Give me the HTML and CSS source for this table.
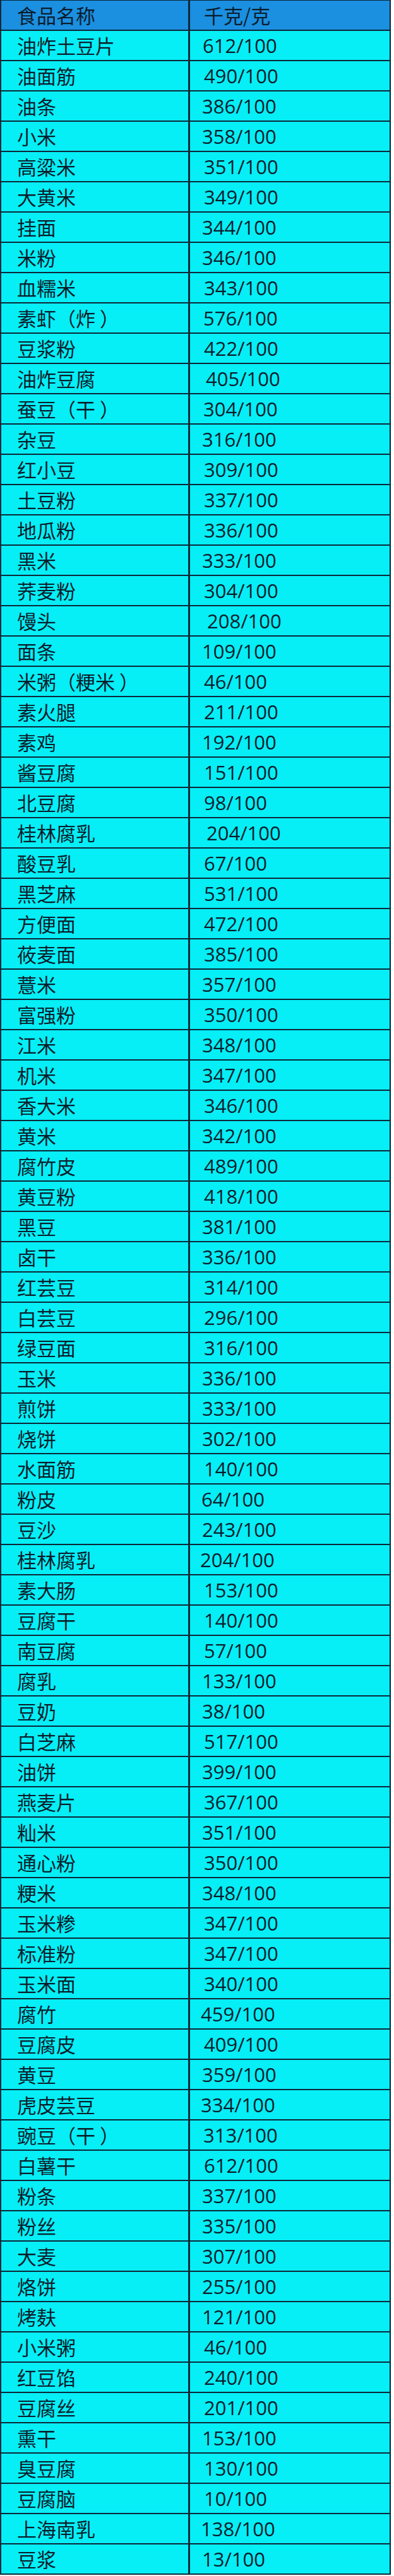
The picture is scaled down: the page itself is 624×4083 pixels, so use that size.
FILE: index.html
```html
<!DOCTYPE html>
<html lang="zh">
<head>
<meta charset="utf-8">
<title>食品名称 千克/克</title>
<link rel="stylesheet" href="styles.css">
</head>
<body>
<div class="table">
  <div class="row head"><div class="name">食品名称</div><div class="val o3">千克/克</div></div>
  <div class="row"><div class="name">油炸土豆片</div><div class="val o1">612/100</div></div>
  <div class="row"><div class="name">油面筋</div><div class="val o3">490/100</div></div>
  <div class="row"><div class="name">油条</div><div class="val">386/100</div></div>
  <div class="row"><div class="name">小米</div><div class="val">358/100</div></div>
  <div class="row"><div class="name">高粱米</div><div class="val o3">351/100</div></div>
  <div class="row"><div class="name">大黄米</div><div class="val o3">349/100</div></div>
  <div class="row"><div class="name">挂面</div><div class="val">344/100</div></div>
  <div class="row"><div class="name">米粉</div><div class="val">346/100</div></div>
  <div class="row"><div class="name">血糯米</div><div class="val o3">343/100</div></div>
  <div class="row"><div class="name">素虾（炸 ）</div><div class="val o2">576/100</div></div>
  <div class="row"><div class="name">豆浆粉</div><div class="val o3">422/100</div></div>
  <div class="row"><div class="name">油炸豆腐</div><div class="val o6">405/100</div></div>
  <div class="row"><div class="name">蚕豆（干 ）</div><div class="val o2">304/100</div></div>
  <div class="row"><div class="name">杂豆</div><div class="val">316/100</div></div>
  <div class="row"><div class="name">红小豆</div><div class="val o3">309/100</div></div>
  <div class="row"><div class="name">土豆粉</div><div class="val o3">337/100</div></div>
  <div class="row"><div class="name">地瓜粉</div><div class="val o3">336/100</div></div>
  <div class="row"><div class="name">黑米</div><div class="val">333/100</div></div>
  <div class="row"><div class="name">荞麦粉</div><div class="val o3">304/100</div></div>
  <div class="row"><div class="name">馒头</div><div class="val o8">208/100</div></div>
  <div class="row"><div class="name">面条</div><div class="val">109/100</div></div>
  <div class="row"><div class="name">米粥（粳米 ）</div><div class="val o3">46/100</div></div>
  <div class="row"><div class="name">素火腿</div><div class="val o3">211/100</div></div>
  <div class="row"><div class="name">素鸡</div><div class="val">192/100</div></div>
  <div class="row"><div class="name">酱豆腐</div><div class="val o3">151/100</div></div>
  <div class="row"><div class="name">北豆腐</div><div class="val o3">98/100</div></div>
  <div class="row"><div class="name">桂林腐乳</div><div class="val o7">204/100</div></div>
  <div class="row"><div class="name">酸豆乳</div><div class="val o3">67/100</div></div>
  <div class="row"><div class="name">黑芝麻</div><div class="val o3">531/100</div></div>
  <div class="row"><div class="name">方便面</div><div class="val o3">472/100</div></div>
  <div class="row"><div class="name">莜麦面</div><div class="val o3">385/100</div></div>
  <div class="row"><div class="name">薏米</div><div class="val">357/100</div></div>
  <div class="row"><div class="name">富强粉</div><div class="val o3">350/100</div></div>
  <div class="row"><div class="name">江米</div><div class="val">348/100</div></div>
  <div class="row"><div class="name">机米</div><div class="val">347/100</div></div>
  <div class="row"><div class="name">香大米</div><div class="val o3">346/100</div></div>
  <div class="row"><div class="name">黄米</div><div class="val">342/100</div></div>
  <div class="row"><div class="name">腐竹皮</div><div class="val o3">489/100</div></div>
  <div class="row"><div class="name">黄豆粉</div><div class="val o3">418/100</div></div>
  <div class="row"><div class="name">黑豆</div><div class="val">381/100</div></div>
  <div class="row"><div class="name">卤干</div><div class="val">336/100</div></div>
  <div class="row"><div class="name">红芸豆</div><div class="val o3">314/100</div></div>
  <div class="row"><div class="name">白芸豆</div><div class="val o3">296/100</div></div>
  <div class="row"><div class="name">绿豆面</div><div class="val o3">316/100</div></div>
  <div class="row"><div class="name">玉米</div><div class="val">336/100</div></div>
  <div class="row"><div class="name">煎饼</div><div class="val">333/100</div></div>
  <div class="row"><div class="name">烧饼</div><div class="val">302/100</div></div>
  <div class="row"><div class="name">水面筋</div><div class="val o3">140/100</div></div>
  <div class="row"><div class="name">粉皮</div><div class="val m1">64/100</div></div>
  <div class="row"><div class="name">豆沙</div><div class="val">243/100</div></div>
  <div class="row"><div class="name">桂林腐乳</div><div class="val m3">204/100</div></div>
  <div class="row"><div class="name">素大肠</div><div class="val o3">153/100</div></div>
  <div class="row"><div class="name">豆腐干</div><div class="val o3">140/100</div></div>
  <div class="row"><div class="name">南豆腐</div><div class="val o3">57/100</div></div>
  <div class="row"><div class="name">腐乳</div><div class="val">133/100</div></div>
  <div class="row"><div class="name">豆奶</div><div class="val">38/100</div></div>
  <div class="row"><div class="name">白芝麻</div><div class="val o3">517/100</div></div>
  <div class="row"><div class="name">油饼</div><div class="val">399/100</div></div>
  <div class="row"><div class="name">燕麦片</div><div class="val o3">367/100</div></div>
  <div class="row"><div class="name">籼米</div><div class="val">351/100</div></div>
  <div class="row"><div class="name">通心粉</div><div class="val o3">350/100</div></div>
  <div class="row"><div class="name">粳米</div><div class="val">348/100</div></div>
  <div class="row"><div class="name">玉米糁</div><div class="val o3">347/100</div></div>
  <div class="row"><div class="name">标准粉</div><div class="val o3">347/100</div></div>
  <div class="row"><div class="name">玉米面</div><div class="val o3">340/100</div></div>
  <div class="row"><div class="name">腐竹</div><div class="val m2">459/100</div></div>
  <div class="row"><div class="name">豆腐皮</div><div class="val o3">409/100</div></div>
  <div class="row"><div class="name">黄豆</div><div class="val">359/100</div></div>
  <div class="row"><div class="name">虎皮芸豆</div><div class="val m2">334/100</div></div>
  <div class="row"><div class="name">豌豆（干 ）</div><div class="val o2">313/100</div></div>
  <div class="row"><div class="name">白薯干</div><div class="val o3">612/100</div></div>
  <div class="row"><div class="name">粉条</div><div class="val">337/100</div></div>
  <div class="row"><div class="name">粉丝</div><div class="val">335/100</div></div>
  <div class="row"><div class="name">大麦</div><div class="val">307/100</div></div>
  <div class="row"><div class="name">烙饼</div><div class="val">255/100</div></div>
  <div class="row"><div class="name">烤麸</div><div class="val">121/100</div></div>
  <div class="row"><div class="name">小米粥</div><div class="val o3">46/100</div></div>
  <div class="row"><div class="name">红豆馅</div><div class="val o3">240/100</div></div>
  <div class="row"><div class="name">豆腐丝</div><div class="val o3">201/100</div></div>
  <div class="row"><div class="name">熏干</div><div class="val">153/100</div></div>
  <div class="row"><div class="name">臭豆腐</div><div class="val o3">130/100</div></div>
  <div class="row"><div class="name">豆腐脑</div><div class="val o3">10/100</div></div>
  <div class="row"><div class="name">上海南乳</div><div class="val m2">138/100</div></div>
  <div class="row"><div class="name">豆浆</div><div class="val">13/100</div></div>
</div>
</body>
</html>
```

FILE: styles.css
```css
html, body {
  margin: 0;
  padding: 0;
  background: #ffffff;
}

.table {
  width: 619px;
  box-sizing: border-box;
  border-top: 1px solid #0d2738;
  border-left: 2px solid #0d2738;
  border-right: 2px solid #0d2738;
  color: #0b1d2b;
  font-family: "Noto Sans CJK SC", "Noto Sans", sans-serif;
}

.row {
  display: grid;
  grid-template-columns: 299px 1fr;
  height: 48px;
  box-sizing: border-box;
  border-bottom: 2px solid #0d2738;
  background: #06eef6;
}

.row.head {
  background: #1b8fe0;
}

.name {
  box-sizing: border-box;
  border-right: 3px solid #0d2738;
  padding-left: 25px;
  font-size: 31px;
  line-height: 46px;
  white-space: pre;
}

.val {
  padding-left: 19px;
  font-family: "Open Sans", "Noto Sans CJK SC", sans-serif;
  font-size: 31px;
  line-height: 46px;
  white-space: nowrap;
}

.head .val {
  font-family: "Noto Sans CJK SC", sans-serif;
}

.val.o1 { padding-left: 20px; }
.val.o2 { padding-left: 21px; }
.val.o3 { padding-left: 22px; }
.val.o6 { padding-left: 25px; }
.val.o7 { padding-left: 26px; }
.val.o8 { padding-left: 27px; }
.val.m1 { padding-left: 18px; }
.val.m2 { padding-left: 17px; }
.val.m3 { padding-left: 16px; }
```
